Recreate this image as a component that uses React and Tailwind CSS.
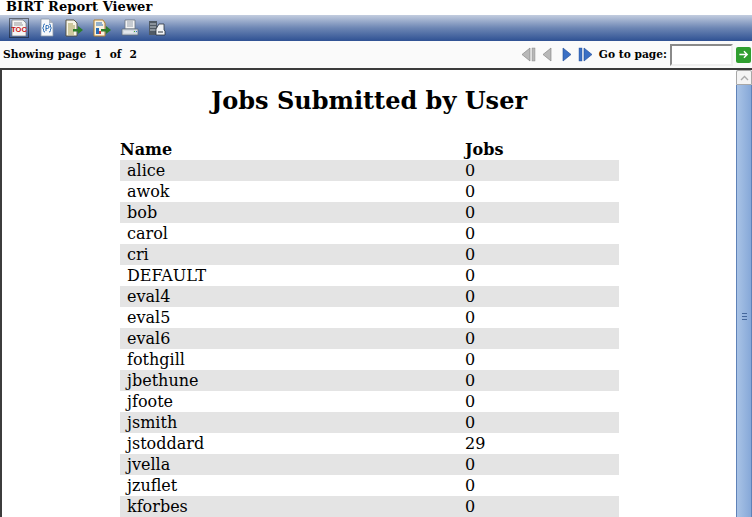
import React from 'react';

const rows = [
    ['alice', '0'], ['awok', '0'], ['bob', '0'], ['carol', '0'], ['cri', '0'], ['DEFAULT', '0'],
    ['eval4', '0'], ['eval5', '0'], ['eval6', '0'], ['fothgill', '0'], ['jbethune', '0'], ['jfoote', '0'],
    ['jsmith', '0'], ['jstoddard', '29'], ['jvella', '0'], ['jzuflet', '0'], ['kforbes', '0'],
];

function TocIcon() {
    return (
        <svg width="20" height="20" viewBox="0 0 20 20">
            <rect x="0.5" y="0.5" width="19" height="19" fill="none" stroke="#111" strokeDasharray="1 1" />
            <path d="M3 2h11l3 3v13H3z" fill="#f6f6f6" stroke="#777" strokeWidth="0.7" />
            <path d="M5 5h8M5 7h9" stroke="#999" />
            <text x="10" y="14" textAnchor="middle" fontSize="7.5" fontWeight="700" fill="#c81818" fontFamily="Liberation Sans, sans-serif">TOC</text>
        </svg>
    );
}

function ParamIcon() {
    return (
        <svg width="16" height="19" viewBox="0 0 16 19">
            <path d="M2 1h8l4 4v13H2z" fill="#f6f8fb" stroke="#8b97a8" strokeWidth="0.8" />
            <path d="M10 1v4h4z" fill="#aab4c2" />
            <path d="M6 6q-1.500 0-1.500 1.500v1.500l-1 1 1 1v1.500q0 1.500 1.500 1.500M10 6q1.500 0 1.500 1.500v1.500l1 1-1 1v1.500q0 1.500-1.500 1.500" fill="none" stroke="#2a6cb5" />
            <path d="M7 13V7.500h1.500a1.500 1.500 0 0 1 0 3H7" fill="none" stroke="#2a6cb5" />
        </svg>
    );
}

function ExportDataIcon() {
    return (
        <svg width="18" height="18" viewBox="0 0 18 18">
            <path d="M1 1h8l3 3v13H1z" fill="#f8f6e8" stroke="#4f4b38" strokeWidth="0.9" />
            <path d="M3 5h5M3 7h7M3 9h7M3 11h6M3 13h6M3 15h6" stroke="#a39a52" />
            <path d="M8 10h5V7l5 4-5 4v-2.500H8z" fill="#2d7d2d" />
        </svg>
    );
}

function ExportReportIcon() {
    return (
        <svg width="18" height="18" viewBox="0 0 18 18">
            <path d="M1 1h9l2 3v13H1z" fill="#fbf3df" stroke="#b4802e" strokeWidth="1" />
            <path d="M3 4h6M3 6h7" stroke="#2a6cb5" />
            <path d="M3 9h3v6H3z" fill="#2a6cb5" />
            <path d="M6 12h2v3H6z" fill="#d43a3a" />
            <path d="M8 10h5V7l5 4-5 4v-2.500H8z" fill="#2d7d2d" />
        </svg>
    );
}

function PrintIcon() {
    return (
        <svg width="18" height="18" viewBox="0 0 18 18">
            <path d="M4 1h10v9H4z" fill="#f4f4f4" stroke="#6b7582" strokeWidth="0.8" />
            <path d="M6 3h6M6 5h6M6 7h6" stroke="#98a1ac" />
            <path d="M1 10h16v6H1z" fill="#d4dae0" stroke="#5f6c7b" strokeWidth="0.8" />
            <path d="M3 13h9" stroke="#f2f4f6" />
            <path d="M13 12h1v1h-1z" fill="#38a838" />
            <path d="M15 12h1v1h-1z" fill="#3878c8" />
        </svg>
    );
}

function PrintServerIcon() {
    return (
        <svg width="18" height="18" viewBox="0 0 18 18">
            <path d="M1 2h8v14H1z" fill="#505a65" />
            <path d="M2 5h6M2 8h6M2 11h6" stroke="#c4ccd4" />
            <path d="M8 10l3-5h5v6l1 1v4H8z" fill="#f2f4f6" stroke="#2c343c" strokeWidth="0.8" />
            <path d="M10 13h5" stroke="#2c343c" />
        </svg>
    );
}

function Arrow({ dir, bar, on }) {
    const fill = on ? '#3a6fc4' : '#b8b8b8';
    const dark = on ? '#1f4a96' : '#7c7c7c';
    const width = bar ? 15 : 11;
    return (
        <svg width={width} height="15" viewBox={`0 0 ${width} 15`}>
            {dir === 'left' ? (
                <>
                    <path d="M9 1v13L1 7.500z" fill={fill} stroke={dark} strokeWidth="0.6" />
                    {bar && <rect x="11" y="1" width="3" height="13" fill={fill} stroke={dark} strokeWidth="0.4" />}
                </>
            ) : bar ? (
                <>
                    <rect x="1" y="1" width="3" height="13" fill={fill} stroke={dark} strokeWidth="0.4" />
                    <path d="M6 1v13l8-6.500z" fill={fill} stroke={dark} strokeWidth="0.6" />
                </>
            ) : (
                <path d="M2 1v13l8-6.500z" fill={fill} stroke={dark} strokeWidth="0.6" />
            )}
        </svg>
    );
}

export default function App() {
    return (
        <div className="h-[517px] w-[752px] overflow-hidden bg-white font-['DejaVu_Serif',serif] text-black">
            <div className="h-[15px] pl-[6px] text-[13px] font-bold leading-[13px] tracking-[0.05px]">BIRT Report Viewer</div>

            {/* Toolbar */}
            <div className="flex h-[26px] items-center bg-gradient-to-b from-[#c3cddf] via-[#6d86b4] to-[#2f5193] pb-[1px]">
                <div className="ml-[9px] flex w-[20px] justify-center"><TocIcon /></div>
                <div className="ml-[10px] flex w-[16px] justify-center"><ParamIcon /></div>
                <div className="ml-[10px] flex w-[18px] justify-center"><ExportDataIcon /></div>
                <div className="ml-[10px] flex w-[18px] justify-center"><ExportReportIcon /></div>
                <div className="ml-[10px] flex w-[18px] justify-center"><PrintIcon /></div>
                <div className="ml-[9px] flex w-[18px] justify-center"><PrintServerIcon /></div>
            </div>

            {/* Page navigation */}
            <div className="flex h-[27px] items-center bg-[#fafafa] text-[10.67px] font-bold">
                <div className="ml-[3px] flex">
                    <span>Showing page</span>
                    <span className="ml-[8px]">1</span>
                    <span className="ml-[8px]">of</span>
                    <span className="ml-[8px]">2</span>
                </div>
                <div className="ml-auto flex items-center">
                    <div className="flex items-center gap-[6px]">
                        <Arrow dir="left" bar />
                        <Arrow dir="left" />
                        <div className="ml-[2px]"><Arrow dir="right" on /></div>
                        <Arrow dir="right" bar on />
                    </div>
                    <div className="ml-[6px]">Go to page:</div>
                    <div className="ml-[3px] h-[22px] w-[63px] border-2 border-[#8a8a8a] border-r-[#f0f0f0] border-b-[#f0f0f0] bg-white" />
                    <div className="ml-[3px] mr-[1px] flex h-[16px] w-[15px] items-center justify-center rounded-[2px] bg-[#2f9e2f]">
                        <svg width="11" height="11" viewBox="0 0 12 12" fill="none" stroke="#fff" strokeWidth="1.6">
                            <path d="M1.500 6h8M6.500 2.500 10 6l-3.500 3.500" />
                        </svg>
                    </div>
                </div>
            </div>

            {/* Report frame */}
            <div className="flex h-[449px] border-t-2 border-l-2 border-[#3c3c3c]">
                <div className="min-w-0 flex-1 overflow-hidden">
                    <h1 className="mt-[16px] text-center text-[24px] font-bold leading-[30px]">Jobs Submitted by User</h1>
                    <div className="mt-[22px] ml-[118px] w-[499px] text-[16px] leading-[21px]">
                        <div className="flex h-[22px] font-bold leading-[23px]">
                            <div className="w-[345px]">Name</div>
                            <div>Jobs</div>
                        </div>
                        {rows.map(([name, jobs], i) => (
                            <div key={name} className={i % 2 === 0 ? 'flex h-[21px] bg-[#e4e4e4]' : 'flex h-[21px]'}>
                                <div className="w-[345px] pl-[7px]">{name}</div>
                                <div>{jobs}</div>
                            </div>
                        ))}
                    </div>
                </div>

                {/* Scrollbar */}
                <div className="flex w-[16px] flex-col bg-[#eef0f3]">
                    <div className="flex h-[15px] items-center justify-center rounded-t-[2px] border border-[#a8a8a8] bg-[#f4f4f4]">
                        <svg width="9" height="6" viewBox="0 0 9 6" fill="none" stroke="#aaa" strokeWidth="1.4">
                            <path d="M1 5l3.500-3.500L8 5" />
                        </svg>
                    </div>
                    <div className="flex flex-1 items-start justify-center border-x border-[#5f82b8] bg-gradient-to-r from-[#a9c3e6] to-[#86a8d8] pt-[228px]">
                        <div className="flex flex-col gap-[2px]">
                            <div className="h-px w-[5px] bg-[#45679c]" />
                            <div className="h-px w-[5px] bg-[#45679c]" />
                            <div className="h-px w-[5px] bg-[#45679c]" />
                        </div>
                    </div>
                </div>
            </div>
        </div>
    );
}
